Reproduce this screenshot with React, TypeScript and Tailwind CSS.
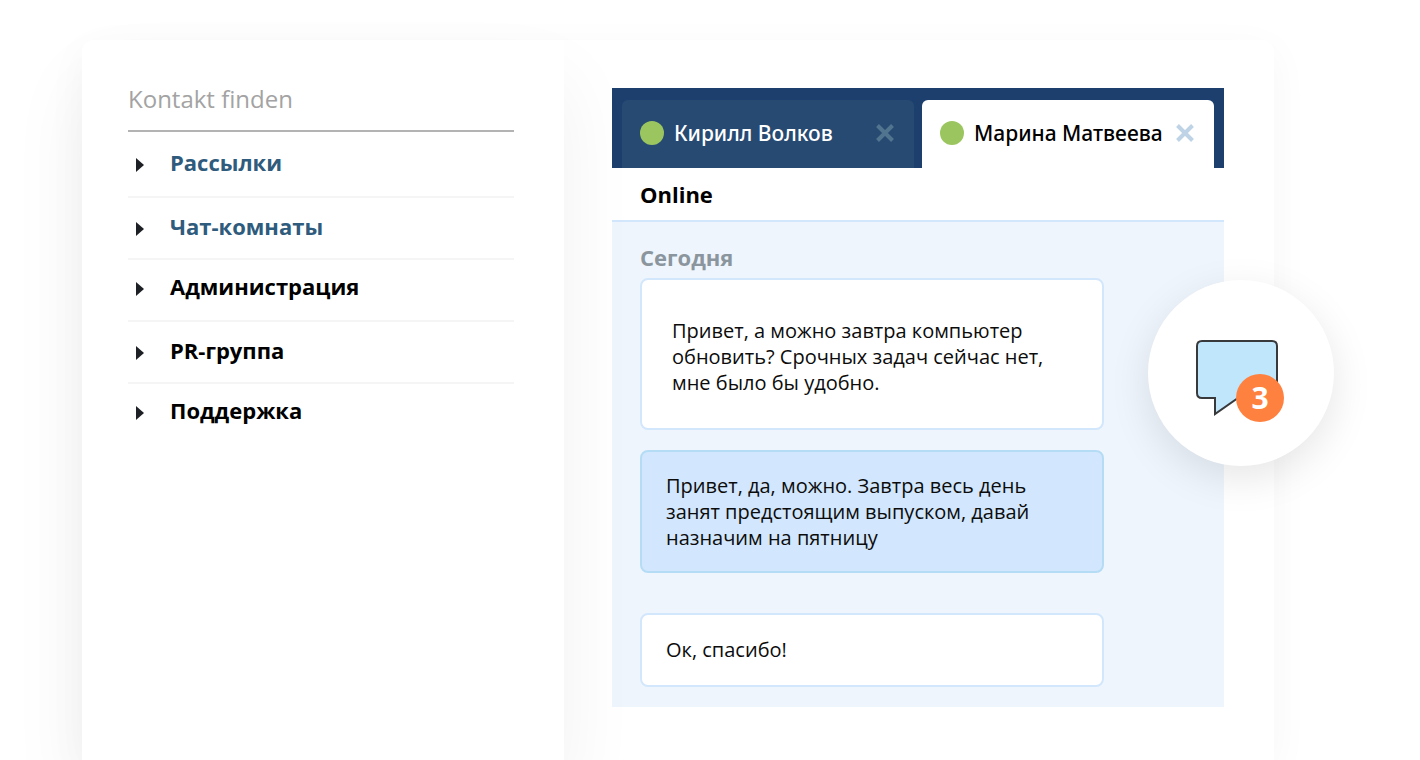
import { useState } from "react";

const groups = [
  { name: "Рассылки", row: "h-16 pb-1 text-[#2f5b7c]" },
  { name: "Чат-комнаты", row: "h-[60px] pb-1 text-[#2f5b7c]" },
  { name: "Администрация", row: "h-[60px] pb-2 text-black" },
  { name: "PR-группа", row: "h-[60px] pb-1 text-black" },
  { name: "Поддержка", row: "h-[60px] pb-2 text-black" },
];

const messages = [
  {
    text: "Привет, а можно завтра компьютер обновить? Срочных задач сейчас нет, мне было бы удобно.",
    box: "mb-5 border-[#d2e7fc] bg-white px-[30px] pt-[38px] pb-8",
  },
  {
    text: "Привет, да, можно. Завтра весь день занят предстоящим выпуском, давай назначим на пятницу",
    box: "mb-10 border-[#b5dcf5] bg-[#d2e7fd] px-6 pt-[21px] pb-5",
  },
  {
    text: "Ок, спасибо!",
    box: "border-[#d2e7fc] bg-white px-6 py-[22px]",
  },
];

const contacts = ["Кирилл Волков", "Марина Матвеева"];

function Arrow() {
  return (
    <svg viewBox="0 0 8 14" className="mt-[6px] h-[14px] w-2 shrink-0" fill="#1d2126" aria-hidden="true">
      <path d="M0 0 8 7 0 14Z" />
    </svg>
  );
}

function Cross() {
  return (
    <svg viewBox="0 0 18 18" className="size-[18px]" fill="none" stroke="currentColor" strokeWidth="4" aria-hidden="true">
      <path d="M1.5 1.5 16.5 16.5M16.5 1.5 1.5 16.5" />
    </svg>
  );
}

function Sidebar() {
  return (
    <aside className="relative rounded-tl-xl bg-white pt-10 pr-[50px] pl-[46px] shadow-[0_40px_80px_rgba(0,0,0,0.06)]">
      <input
        type="search"
        aria-label="Kontakt finden"
        placeholder="Kontakt finden"
        className="block h-[52px] w-full border-b-2 border-[#b3b3b3] bg-transparent pb-[14px] text-2xl outline-none placeholder:text-[#a3a3a3]"
      />
      <ul className="divide-y-2 divide-[#f5f5f5]">
        {groups.map((g) => (
          <li key={g.name}>
            <button type="button" className={`flex w-full items-center gap-[26px] pl-2 text-left text-[22px] leading-7 font-bold ${g.row}`}>
              <Arrow />
              {g.name}
            </button>
          </li>
        ))}
      </ul>
    </aside>
  );
}

function Chat() {
  const [active, setActive] = useState(1);
  return (
    <section className="pt-12 pr-[50px] pb-12 pl-12">
      <div className="flex gap-2 bg-[#1c3f6e] px-[10px] pt-3">
        {contacts.map((name, i) => (
          <div
            key={name}
            className={`flex h-[68px] min-w-0 flex-1 items-center rounded-t-md pr-5 pb-[3px] pl-[18px] ${
              i === active ? "bg-white text-black" : "bg-[#274a73] text-white"
            }`}
          >
            <button
              type="button"
              onClick={() => setActive(i)}
              className="flex min-w-0 flex-1 items-center gap-[10px] text-left font-['Noto_Sans',sans-serif] text-[21px] leading-7 font-medium whitespace-nowrap"
            >
              <span className="size-6 shrink-0 rounded-full bg-[#9bc65f]" />
              {name}
            </button>
            <button type="button" aria-label="Закрыть" className={i === active ? "text-[#bfd3e6]" : "text-[#52758f]"}>
              <Cross />
            </button>
          </div>
        ))}
      </div>
      <h2 className="border-b-2 border-[#d2e7fc] pt-3 pb-3 pl-7 text-[22px] leading-7 font-bold text-black">Online</h2>
      <div className="bg-[#eef5fd] px-7 pt-[21px] pb-5">
        <h3 className="mb-[7px] text-[22px] leading-7 font-bold text-[#8b959e]">Сегодня</h3>
        <ul>
          {messages.map((m) => (
            <li key={m.text} className={`w-[464px] max-w-full rounded-lg border-2 text-xl leading-[26px] text-[#0c0c0c] ${m.box}`}>
              <p className="max-w-[380px]">{m.text}</p>
            </li>
          ))}
        </ul>
      </div>
    </section>
  );
}

function UnreadBubble() {
  return (
    <button
      type="button"
      aria-label="Новые сообщения"
      className="absolute top-60 -right-[60px] size-[186px] rounded-full bg-white pt-4 pr-2 shadow-[0_12px_40px_rgba(0,0,0,0.1)]"
    >
      <span className="relative inline-block">
        <svg viewBox="0 0 82 76" className="h-[76px] w-[82px]" fill="#c0e6fb" stroke="#37393b" strokeWidth="2" aria-hidden="true">
          <path d="M6 1H76Q81 1 81 6V53Q81 58 76 58H42L19 74V58H6Q1 58 1 53V6Q1 1 6 1Z" />
        </svg>
        <span className="absolute -right-[6px] -bottom-[6px] flex size-12 items-center justify-center rounded-full bg-[#ff813f] text-3xl font-bold text-white">
          3
        </span>
      </span>
    </button>
  );
}

export default function App() {
  return (
    <main className="flex min-h-screen flex-col overflow-hidden bg-white pt-10 pr-[146px] pl-[82px] font-['Open_Sans',sans-serif]">
      <div className="relative grid grow grid-cols-[482fr_710fr] rounded-t-xl bg-white shadow-[0_10px_40px_rgba(0,0,0,0.04)]">
        <Sidebar />
        <Chat />
        <UnreadBubble />
      </div>
    </main>
  );
}
